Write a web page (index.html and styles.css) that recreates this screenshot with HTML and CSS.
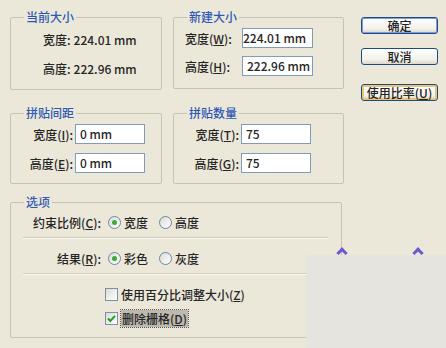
FILE: index.html
```html
<!DOCTYPE html>
<html lang="zh-CN">
<head>
    <meta charset="UTF-8">
    <title>图像尺寸</title>
    <link rel="stylesheet" href="styles.css">
</head>
<body>
    <div class="dialog">
        <div class="groups">
            <!-- 当前大小 -->
            <fieldset class="group g-current">
                <legend>当前大小</legend>
                <div class="row"><span class="lbl">宽度:</span><span class="val">224.01 mm</span></div>
                <div class="row"><span class="lbl">高度:</span><span class="val">222.96 mm</span></div>
            </fieldset>

            <!-- 新建大小 -->
            <fieldset class="group g-new">
                <legend>新建大小</legend>
                <div class="row">
                    <span class="lbl">宽度(<u>W</u>):</span>
                    <div class="field"><span class="scrolled">224.01 mm</span></div>
                </div>
                <div class="row">
                    <span class="lbl">高度(<u>H</u>):</span>
                    <div class="field">222.96 mm</div>
                </div>
            </fieldset>

            <!-- 拼贴间距 -->
            <fieldset class="group g-gap">
                <legend>拼贴间距</legend>
                <div class="row">
                    <span class="lbl">宽度(<u>I</u>):</span>
                    <div class="field">0 mm</div>
                </div>
                <div class="row">
                    <span class="lbl">高度(<u>E</u>):</span>
                    <div class="field">0 mm</div>
                </div>
            </fieldset>

            <!-- 拼贴数量 -->
            <fieldset class="group g-count">
                <legend>拼贴数量</legend>
                <div class="row">
                    <span class="lbl">宽度(<u>T</u>):</span>
                    <div class="field">75</div>
                </div>
                <div class="row">
                    <span class="lbl">高度(<u>G</u>):</span>
                    <div class="field">75</div>
                </div>
            </fieldset>

            <!-- 选项 -->
            <fieldset class="group g-options">
                <legend>选项</legend>
                <div class="opt-row">
                    <span class="lbl">约束比例(<u>C</u>):</span>
                    <span class="radio on"></span><span class="choice">宽度</span>
                    <span class="radio"></span><span class="choice">高度</span>
                </div>
                <div class="sep"></div>
                <div class="opt-row second">
                    <span class="lbl">结果(<u>R</u>):</span>
                    <span class="radio on"></span><span class="choice">彩色</span>
                    <span class="radio"></span><span class="choice">灰度</span>
                </div>
                <div class="sep"></div>
                <div class="check-row">
                    <span class="check"></span><span>使用百分比调整大小(<u>Z</u>)</span>
                </div>
                <div class="check-row">
                    <span class="check">
                        <svg width="11" height="11" viewBox="0 0 11 11"><path d="M2 5.5 L4.3 8 L9 2.8" fill="none" stroke="#21a121" stroke-width="2"/></svg>
                    </span><span class="focused">删除栅格(<u>D</u>)</span>
                </div>
            </fieldset>
        </div>

        <div class="buttons">
            <button class="btn default">确定</button>
            <button class="btn">取消</button>
            <button class="btn hot">使用比率(<u>U</u>)</button>
        </div>
    </div>

    <!-- 截图上的遮挡 -->
    <span class="caret caret-a"></span>
    <span class="caret caret-b"></span>
    <div class="cover"></div>
</body>
</html>
```

FILE: styles.css
```css
body {
    margin: 0;
    width: 446px;
    height: 348px;
    overflow: hidden;
    position: relative;
    background-color: #ebe8d9;
    font-family: "Noto Sans CJK SC", sans-serif;
    font-size: 12px;
    font-weight: 500;
    color: #262626;
}

u {
    text-decoration: underline;
    text-underline-offset: 1px;
}

.dialog {
    display: flex;
    padding: 10px 0 0 10px;
}

.groups {
    display: grid;
    grid-template-columns: 152px 171px;
    column-gap: 11px;
    width: 334px;
}

.group {
    box-sizing: border-box;
    margin: 0;
    padding: 0;
    min-width: 0;
    border: 1px solid #c6c3b3;
    border-radius: 2px;
}

.group legend {
    margin-left: 13px;
    padding: 0 2px;
    line-height: 14px;
    color: #2f58b4;
}

.row {
    display: flex;
    align-items: center;
    height: 20px;
}

.lbl {
    white-space: nowrap;
}

/* 当前大小 */
.g-current {
    height: 80px;
    padding-top: 5px;
}

.g-current .row {
    padding-left: 32px;
}

.g-current .row + .row {
    margin-top: 9px;
}

.val {
    margin-left: 3px;
}

/* 新建大小 */
.g-new {
    height: 79px;
    padding-top: 4px;
}

.g-new .row {
    padding-left: 11px;
}

.g-new .row + .row {
    margin-top: 8px;
}

.g-new .lbl {
    width: 55px;
}

.g-new .field {
    width: 71px;
}

.scrolled {
    margin-left: -4px;
}

/* 拼贴间距 / 拼贴数量 */
.g-gap,
.g-count {
    margin-top: 16px;
    height: 78px;
    padding-top: 4px;
}

.g-gap .row + .row,
.g-count .row + .row {
    margin-top: 9px;
}

.g-gap .lbl {
    width: 62px;
    text-align: right;
}

.g-gap .field {
    width: 70px;
}

.g-count .lbl {
    width: 65px;
    text-align: right;
}

.g-count .field {
    width: 70px;
}

.field {
    box-sizing: border-box;
    height: 20px;
    margin-left: 2px;
    padding-left: 4px;
    border: 1px solid #7f9db9;
    background-color: #fff;
    line-height: 18px;
    white-space: nowrap;
    overflow: hidden;
}

/* 选项 */
.g-options {
    grid-column: 1 / 3;
    margin: 11px 2px 0 0;
    height: 143px;
    padding-top: 5px;
}

.opt-row {
    display: flex;
    align-items: center;
    height: 16px;
    padding-left: 14px;
}

.opt-row.second {
    margin-top: 11px;
}

.opt-row .lbl {
    width: 76px;
    text-align: right;
    margin-right: 7px;
}

.radio {
    box-sizing: border-box;
    width: 13px;
    height: 13px;
    border: 1px solid #6d84a8;
    border-radius: 50%;
    background: linear-gradient(135deg, #dcdcd4, #fff);
    display: flex;
    align-items: center;
    justify-content: center;
}

.radio.on::after {
    content: "";
    width: 5px;
    height: 5px;
    border-radius: 50%;
    background-color: #3cab3c;
}

.choice {
    margin: 0 11px 0 3px;
}

.sep {
    margin: 7px 13px 0 12px;
    height: 0;
    border-top: 1px solid #cfccbd;
    border-bottom: 1px solid #faf9f3;
}

.sep + .check-row {
    margin-top: 11px;
}

.check-row {
    display: flex;
    align-items: center;
    height: 16px;
    padding-left: 94px;
}

.check-row + .check-row {
    margin-top: 8px;
}

.check {
    box-sizing: border-box;
    display: flex;
    width: 13px;
    height: 13px;
    margin-right: 3px;
    border: 1px solid #7d8fae;
    background: linear-gradient(135deg, #dcdcd4, #fff);
}

.focused {
    background-color: #bcb9ae;
    outline: 1px dotted #555;
    padding: 0 1px;
}

/* 按钮 */
.buttons {
    display: flex;
    flex-direction: column;
    margin: 7px 0 0 17px;
}

.btn {
    box-sizing: border-box;
    width: 77px;
    height: 17px;
    padding: 0;
    border: 1px solid #1f4a7c;
    border-radius: 3px;
    background: linear-gradient(#ffffff, #f2f1eb 70%, #dcd8cc);
    font-family: "Noto Sans CJK SC", sans-serif;
    font-size: 12px;
    font-weight: 500;
    line-height: 15px;
    color: #222;
}

.btn + .btn {
    margin-top: 14px;
}

.btn.default {
    box-shadow: inset 0 0 0 1px #7c9be0;
}

.btn.hot {
    margin-top: 19px;
    box-shadow: inset 0 0 0 2px #e9c57a;
}

/* 截图上覆盖的浅色块和紫色标记 */
.cover {
    position: absolute;
    left: 306px;
    top: 255px;
    right: 0;
    bottom: 0;
    background-color: #e5e4de;
}

.caret {
    position: absolute;
    top: 249px;
    width: 5px;
    height: 5px;
    border-top: 3px solid #6a5ad0;
    border-left: 3px solid #6a5ad0;
    transform: rotate(45deg);
}

.caret-a {
    left: 338px;
}

.caret-b {
    left: 414px;
}
```
